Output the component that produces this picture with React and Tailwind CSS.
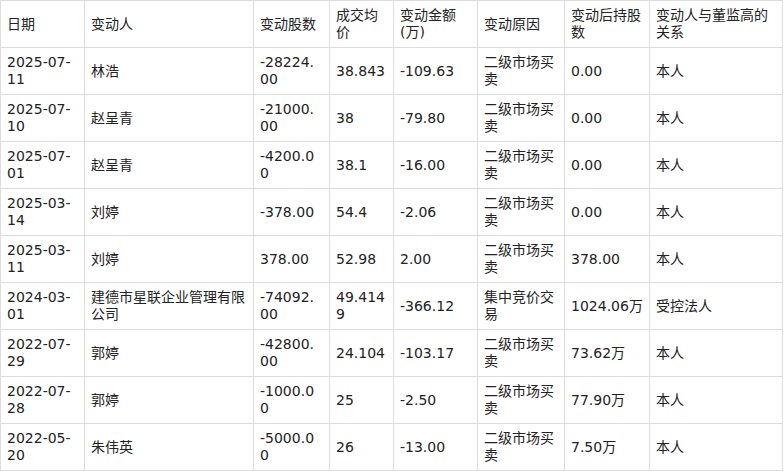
import React from "react";

const headers = ["日期", "变动人", "变动股数", "成交均价", "变动金额(万)", "变动原因", "变动后持股数", "变动人与董监高的关系"];
const rows = [
  ["2025-07-11", "林浩", "-28224.00", "38.843", "-109.63", "二级市场买卖", "0.00", "本人"],
  ["2025-07-10", "赵呈青", "-21000.00", "38", "-79.80", "二级市场买卖", "0.00", "本人"],
  ["2025-07-01", "赵呈青", "-4200.00", "38.1", "-16.00", "二级市场买卖", "0.00", "本人"],
  ["2025-03-14", "刘婷", "-378.00", "54.4", "-2.06", "二级市场买卖", "0.00", "本人"],
  ["2025-03-11", "刘婷", "378.00", "52.98", "2.00", "二级市场买卖", "378.00", "本人"],
  ["2024-03-01", "建德市星联企业管理有限公司", "-74092.00", "49.4149", "-366.12", "集中竞价交易", "1024.06万", "受控法人"],
  ["2022-07-29", "郭婷", "-42800.00", "24.104", "-103.17", "二级市场买卖", "73.62万", "本人"],
  ["2022-07-28", "郭婷", "-1000.00", "25", "-2.50", "二级市场买卖", "77.90万", "本人"],
  ["2022-05-20", "朱伟英", "-5000.00", "26", "-13.00", "二级市场买卖", "7.50万", "本人"],
];
const widths = [84, 169, 76, 64, 84, 87, 85, 133];

export default function App() {
  return (
    <div className="bg-white" style={{ width: 784, height: 471 }}>
      <table
        className="table-fixed border-collapse text-[14px] leading-[17px] text-[#222]"
        style={{ width: 783, fontFamily: '"DejaVu Sans", "Noto Sans CJK SC", sans-serif' }}
      >
        <colgroup>
          {widths.map((w, i) => (
            <col key={i} style={{ width: w }} />
          ))}
        </colgroup>
        <thead>
          <tr className="h-[47px]">
            {headers.map((h, i) => (
              <th key={i} className="border border-[#dddddd] px-[6px] py-[6px] text-left font-normal align-middle break-all">
                {h}
              </th>
            ))}
          </tr>
        </thead>
        <tbody>
          {rows.map((r, ri) => (
            <tr key={ri} className="h-[47px]">
              {r.map((c, ci) => (
                <td
                  key={ci}
                  className={
                    ci === 2
                      ? "border border-[#dddddd] pl-[6px] pr-[9px] py-[6px] align-middle break-all"
                      : "border border-[#dddddd] px-[6px] py-[6px] align-middle break-all"
                  }
                >
                  {c}
                </td>
              ))}
            </tr>
          ))}
        </tbody>
      </table>
    </div>
  );
}
